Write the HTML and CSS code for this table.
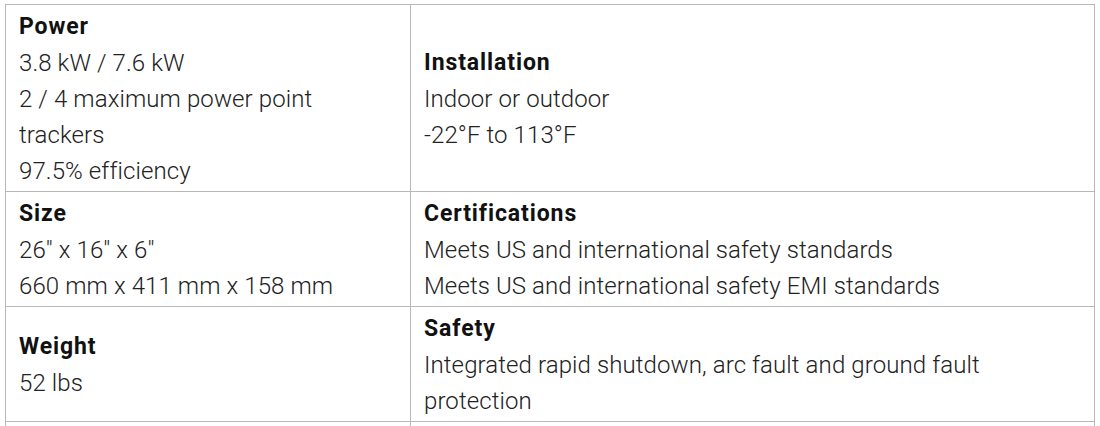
FILE: index.html
```html
<!DOCTYPE html>
<html lang="en">
<head>
<meta charset="utf-8">
<title>Specifications</title>
<link rel="stylesheet" href="styles.css">
</head>
<body>
<table class="specs">
  <colgroup>
    <col class="col-left">
    <col class="col-right">
  </colgroup>
  <tbody>
    <tr class="row-1">
      <td>
        <div class="label">Power</div>
        <div class="value">3.8 kW / 7.6 kW</div>
        <div class="value">2 / 4 maximum power point trackers</div>
        <div class="value">97.5% efficiency</div>
      </td>
      <td>
        <div class="label">Installation</div>
        <div class="value">Indoor or outdoor</div>
        <div class="value">-22°F to 113°F</div>
      </td>
    </tr>
    <tr>
      <td>
        <div class="label">Size</div>
        <div class="value">26" x 16" x 6"</div>
        <div class="value">660 mm x 411 mm x 158 mm</div>
      </td>
      <td>
        <div class="label">Certifications</div>
        <div class="value">Meets US and international safety standards</div>
        <div class="value">Meets US and international safety EMI standards</div>
      </td>
    </tr>
    <tr>
      <td>
        <div class="label">Weight</div>
        <div class="value">52 lbs</div>
      </td>
      <td>
        <div class="label">Safety</div>
        <div class="value">Integrated rapid shutdown, arc fault and ground fault protection</div>
      </td>
    </tr>
    <tr class="row-empty">
      <td></td>
      <td></td>
    </tr>
  </tbody>
</table>
</body>
</html>
```

FILE: styles.css
```css
html, body {
  background: #ffffff;
}
body {
  margin: 4px 5px 0 5px;
  font-family: Roboto, "Liberation Sans", sans-serif;
  color: #1c1c1c;
}
.specs {
  width: 1090px;
  border-collapse: collapse;
  table-layout: fixed;
}
.col-left {
  width: 405px;
}
.specs td {
  border: 1px solid #b8b8b8;
  padding: 4px 12px 2px 13px;
  vertical-align: middle;
  font-size: 23px;
  line-height: 36px;
}
.label {
  font-weight: 700;
  color: #111111;
  letter-spacing: 0.9px;
}
.value {
  font-family: "Roboto Light", Roboto, "Liberation Sans", sans-serif;
  font-weight: 300;
  font-size: 24px;
  letter-spacing: 0.1px;
  color: #222222;
}
.row-empty td {
  height: 120px;
}
```
